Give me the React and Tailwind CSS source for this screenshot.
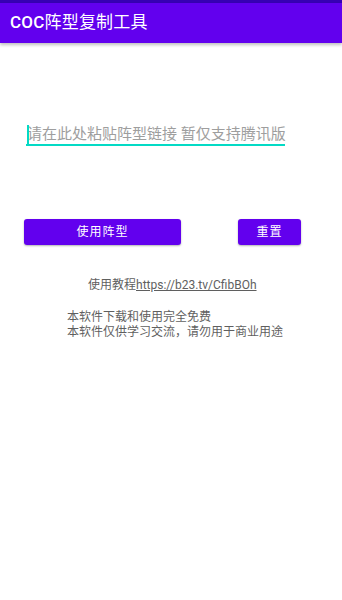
export default function App() {
  const font = { fontFamily: '"Roboto", "Noto Sans CJK SC", sans-serif' }
  return (
    <div className="w-[342px] h-[600px] bg-white flex flex-col" style={font}>
      <div className="h-[3px] bg-[#3700B3]" />
      <div className="h-[40px] bg-[#6200EE] flex items-center pl-[10px] shadow-[0_2px_3px_rgba(0,0,0,0.25)]">
        <span className="text-white text-[17px] tracking-[0.2px]">
          <span className="font-medium">COC</span>阵型复制工具
        </span>
      </div>

      <div className="pl-[26px] pt-[81px]">
        <div className="w-[259px] border-b-2 border-[#03DAC5] flex items-center h-[22px] relative">
          <div className="absolute left-[1px] top-[1px] w-[2px] h-[19px] bg-[#03DAC5]" />
          <span className="text-[15px] text-[#9e9e9e] leading-none pl-[1px] whitespace-nowrap">
            请在此处粘贴阵型链接 暂仅支持腾讯版
          </span>
        </div>
      </div>

      <div className="flex pl-[24px] pt-[73px] gap-[57px]">
        <button className="w-[157px] h-[26px] rounded-[3px] bg-[#6200EE] text-white text-[12px] shadow-[0_1px_2px_rgba(0,0,0,0.3)] tracking-[1px]">
          使用阵型
        </button>
        <button className="w-[63px] h-[26px] rounded-[3px] bg-[#6200EE] text-white text-[12px] shadow-[0_1px_2px_rgba(0,0,0,0.3)] tracking-[1px]">
          重置
        </button>
      </div>

      <div className="pl-[88px] pt-[32px] text-[12px] text-[#5f5f5f] leading-[16px]">
        使用教程<span className="underline">https://b23.tv/CfibBOh</span>
      </div>

      <div className="pl-[67px] pt-[17px] text-[12px] text-[#5f5f5f] leading-[15px]">
        <div>本软件下载和使用完全免费</div>
        <div>本软件仅供学习交流，请勿用于商业用途</div>
      </div>
    </div>
  )
}
